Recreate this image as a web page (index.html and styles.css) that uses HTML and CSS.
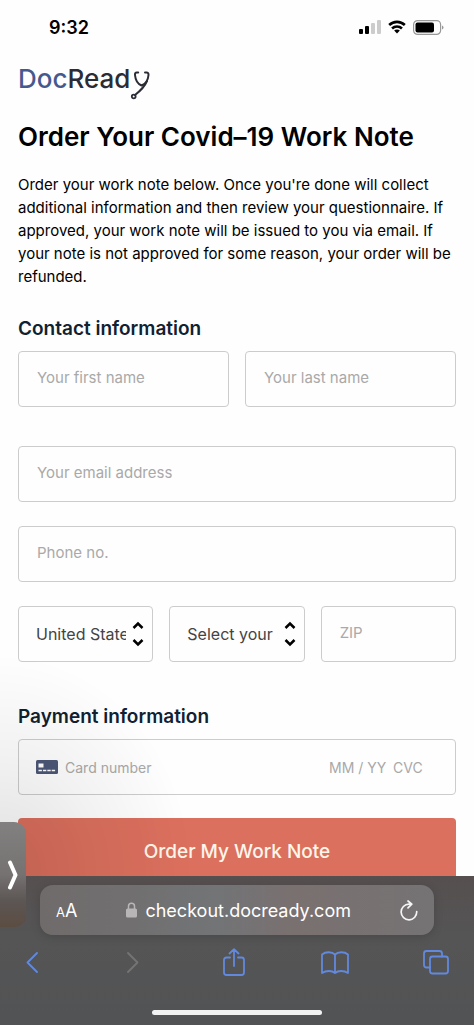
FILE: index.html
```html
<!DOCTYPE html>
<html lang="en">
<head>
<meta charset="utf-8">
<meta name="viewport" content="width=device-width, initial-scale=1">
<title>Order Your Covid-19 Work Note</title>
<link rel="stylesheet" href="styles.css">
</head>
<body>
<header class="status">
  <time class="clock">9:32</time>
  <div class="indicators">
    <svg width="22" height="14" viewBox="0 0 22 14" aria-hidden="true">
      <rect x="0" y="9" width="4" height="5" rx="1"/>
      <rect x="6" y="6" width="4" height="8" rx="1"/>
      <rect x="12" y="3" width="4" height="11" rx="1" fill="#ccc"/>
      <rect x="18" y="0" width="4" height="14" rx="1" fill="#ccc"/>
    </svg>
    <svg width="18" height="14" viewBox="0 0 20 15" fill="none" stroke="#000" stroke-width="2.900" aria-hidden="true">
      <path d="M1.300 5.300C6.200.6 13.800.6 18.700 5.300"/>
      <path d="M4.500 9.100C7.600 6.200 12.400 6.200 15.500 9.100"/>
      <path d="M6.800 11.500C8.500 10 11.500 10 13.200 11.500L10 14.800Z" fill="#000" stroke="none"/>
    </svg>
    <svg width="31" height="15" viewBox="0 0 31 15" aria-hidden="true">
      <rect x=".6" y=".6" width="27" height="13.800" rx="4" fill="none" stroke="#999" stroke-width="1.200"/>
      <rect x="2.500" y="2.500" width="18.500" height="10" rx="2"/>
      <path d="M29 5.500v4q1.500-.5 1.500-2T29 5.500z" fill="#999"/>
    </svg>
  </div>
</header>

<main class="page">
  <div class="logo" role="img" aria-label="DocReady">
    <span class="logo-doc">Doc</span><span class="logo-read">Read</span>
    <svg class="logo-y" width="22" height="34" viewBox="0 0 22 34" fill="none" stroke="#2b2d36" stroke-width="2" stroke-linecap="round" stroke-linejoin="round" aria-hidden="true">
      <path d="M8.200 6.500H6.800Q4.800 6.500 5 9C5.400 13.500 7.800 18 11.500 19.500C15.500 18 18.200 13.500 18.500 9Q18.600 6.500 16.500 6.500H15"/>
      <path d="M17 15Q14 22 5 29"/>
      <circle cx="3.700" cy="30.500" r="1.900" stroke-width="1.800"/>
    </svg>
  </div>
  <h1 class="title">Order Your Covid–19 Work Note</h1>
  <p class="intro">Order your work note below. Once you're done will collect additional information and then review your questionnaire. If approved, your work note will be issued to you via email. If your note is not approved for some reason, your order will be refunded.</p>

  <form class="form">
    <h2 class="section">Contact information</h2>
    <div class="names">
      <input class="field" type="text" aria-label="First name" placeholder="Your first name">
      <input class="field" type="text" aria-label="Last name" placeholder="Your last name">
    </div>
    <div class="contact">
      <input class="field" type="email" aria-label="Email address" placeholder="Your email address">
      <input class="field" type="tel" aria-label="Phone number" placeholder="Phone no.">
      <div class="region">
        <div class="picker">
          <select class="select" aria-label="Country"><option>United States</option></select>
          <svg class="arrows" width="12" height="26" viewBox="0 0 12 26" aria-hidden="true"><path d="M1.500 7 6 2.500 10.500 7M1.500 19 6 23.500 10.500 19"/></svg>
        </div>
        <div class="picker">
          <select class="select" aria-label="State"><option>Select your state</option></select>
          <svg class="arrows" width="12" height="26" viewBox="0 0 12 26" aria-hidden="true"><path d="M1.500 7 6 2.500 10.500 7M1.500 19 6 23.500 10.500 19"/></svg>
        </div>
        <input class="field" type="text" aria-label="ZIP code" placeholder="ZIP">
      </div>
    </div>
    <h2 class="section">Payment information</h2>
    <div class="card">
      <svg width="22" height="14" viewBox="0 0 22 14" aria-hidden="true">
        <rect width="22" height="14" rx="1.500" fill="#4c5878"/>
        <path d="M2.500 3.500h5v4h-5z" fill="#fff"/>
        <path d="M2.500 10.500H20" stroke="#fff" stroke-width="1.500" stroke-dasharray="3.400 1"/>
      </svg>
      <input class="card-input card-number" type="text" aria-label="Card number" placeholder="Card number">
      <input class="card-input card-date" type="text" aria-label="Expiry date" placeholder="MM / YY">
      <input class="card-input card-cvc" type="text" aria-label="CVC" placeholder="CVC">
    </div>
    <button class="submit" type="submit">Order My Work Note</button>
  </form>
</main>

<div class="shade"></div>

<footer class="browser">
  <div class="address">
    <button class="tool text-size" type="button" aria-label="Text size"><span class="small-a">A</span>A</button>
    <div class="url">
      <svg width="11" height="16" viewBox="0 0 11 16" aria-hidden="true"><rect y="6.500" width="11" height="9" rx="1.500" fill="#b9b6b7"/><path d="M2.500 7V4.300a3 3 0 0 1 6 0V7" fill="none" stroke="#b9b6b7" stroke-width="1.500"/></svg>
      <span>checkout.docready.com</span>
    </div>
    <button class="tool" type="button" aria-label="Reload">
      <svg width="18" height="21" viewBox="0 0 18 21" fill="none" stroke="#f5f5f5" stroke-width="1.700" stroke-linecap="round" stroke-linejoin="round"><path d="M16.700 11.500A7.800 7.800 0 1 1 9 4.200h2.500M8 1l3.800 3.200L8 7.800"/></svg>
    </button>
  </div>
  <nav class="toolbar" aria-label="Browser">
    <button class="tool" type="button" aria-label="Back"><svg width="12" height="28" viewBox="0 0 12 28"><path d="M11 5 1.500 14.500 11 24"/></svg></button>
    <button class="tool forward" type="button" aria-label="Forward"><svg width="12" height="28" viewBox="0 0 12 28"><path d="M1 5l9.500 9.500L1 24"/></svg></button>
    <button class="tool" type="button" aria-label="Share"><svg width="22" height="28" viewBox="0 0 22 28"><path d="M7 9.500H3.500Q1 9.500 1 12v12.500Q1 27 3.500 27h15q2.500 0 2.500-2.500V12q0-2.500-2.500-2.500H15M11 18V1.500M6.500 5.500 11 1.200l4.500 4.300"/></svg></button>
    <button class="tool" type="button" aria-label="Bookmarks"><svg width="28" height="28" viewBox="0 0 28 28"><path d="M14 6.500C11 3.500 4.500 3.500 1 6.500V25C5 22.300 11 22.300 14 25C17 22.300 23 22.300 27 25V6.500C23.500 3.500 17 3.500 14 6.500zM14 6.500V25"/></svg></button>
    <button class="tool" type="button" aria-label="Tabs"><svg width="26" height="28" viewBox="0 0 26 28"><rect x="7" y="8.500" width="18" height="17" rx="2.500"/><path d="M7 19.500H3.500Q1 19.500 1 17V5.500Q1 3 3.500 3h13Q19 3 19 5.500v3"/></svg></button>
  </nav>
  <div class="home"></div>
</footer>

<button class="side-tab" type="button" aria-label="Open side panel">
  <svg width="12" height="30" viewBox="0 0 12 30" fill="none" stroke="#fff" stroke-width="4" stroke-linecap="round" stroke-linejoin="round"><path d="M3 2.500 8.500 15 3 27.500"/></svg>
</button>
</body>
</html>
```
FILE: styles.css
```css
* {
  box-sizing: border-box;
}

body {
  margin: 0;
  background: #fefefe;
  color: #000;
  font-family: Inter, "Liberation Sans", sans-serif;
}

button,
input,
select {
  margin: 0;
  font-family: inherit;
}

svg {
  display: block;
  flex: none;
}

.status {
  display: flex;
  align-items: center;
  justify-content: space-between;
  height: 54px;
  padding: 0 30px 0 49px;
}

.clock {
  font-size: 18px;
  font-weight: 600;
}

.indicators {
  display: flex;
  align-items: center;
  gap: 7px;
}

.page {
  padding: 12px 18px 0;
}

.logo {
  display: flex;
  height: 36px;
  font-size: 26px;
  font-weight: 500;
  line-height: 26px;
}

.logo-doc {
  color: #46598f;
}

.logo-read {
  color: #2b2d36;
}

.title {
  margin: 17px 0 0;
  font-size: 26px;
  font-weight: 600;
  line-height: 36px;
  white-space: nowrap;
}

.intro {
  margin: 18px 0 0;
  font-size: 15px;
  line-height: 23px;
}

.section {
  margin: 29px 0 10px;
  color: #0f2233;
  font-size: 19px;
  font-weight: 600;
  line-height: 24px;
}

.names {
  display: grid;
  grid-template-columns: 1fr 1fr;
  gap: 16px;
}

.contact {
  display: grid;
  gap: 24px;
  margin: 39px 0 43px;
}

.region {
  display: grid;
  grid-template-columns: 1fr 1fr 1fr;
  gap: 16px;
}

.field,
.select,
.card {
  width: 100%;
  min-width: 0;
  height: 56px;
  border: 1px solid #ccc;
  border-radius: 4px;
  background: transparent;
}

.field {
  padding: 0 18px 4px;
  font-size: 15px;
}

.field::placeholder,
.card-input::placeholder {
  color: #a9a9a9;
  opacity: 1;
}

.picker {
  position: relative;
  min-width: 0;
}

.select {
  padding: 0 26px 0 17px;
  color: #444;
  font-size: 16px;
  appearance: none;
}

.arrows {
  position: absolute;
  top: 15px;
  right: 9px;
  fill: none;
  stroke: #000;
  stroke-width: 2.5;
  pointer-events: none;
}

.card {
  display: flex;
  align-items: center;
  padding: 0 24px 0 17px;
}

.card-input {
  min-width: 0;
  padding: 0;
  border: 0;
  background: transparent;
  font-size: 14px;
}

.card-number {
  flex: 1;
  margin-left: 7px;
}

.card-date {
  width: 64px;
}

.card-cvc {
  width: 38px;
}

.submit {
  width: 100%;
  height: 66px;
  margin-top: 23px;
  border: 0;
  border-radius: 4px;
  background: #dc705e;
  color: #fff6ea;
  font-size: 19px;
  font-weight: 500;
}

.shade {
  position: fixed;
  bottom: 0;
  left: 0;
  width: 200px;
  height: 380px;
  background: radial-gradient(ellipse at 0 60%, rgba(0, 0, 0, 0.12), rgba(0, 0, 0, 0.05) 35%, rgba(0, 0, 0, 0) 68%);
  pointer-events: none;
}

.browser {
  position: fixed;
  right: 0;
  bottom: 0;
  left: 0;
  height: 149px;
  padding-top: 9px;
  background: linear-gradient(#564f4f, #555556 40%, #525354);
}

.address {
  display: flex;
  align-items: center;
  justify-content: space-between;
  height: 50px;
  margin: 0 40px;
  padding: 0 16px;
  border-radius: 13px;
  background: linear-gradient(90deg, #706b6b, #727476 45%, #7a7070 65%, #757374);
  box-shadow: 0 2px 10px rgba(0, 0, 0, 0.15);
  color: #fff;
}

.tool {
  padding: 0;
  border: 0;
  background: transparent;
  color: inherit;
}

.text-size {
  font-size: 18px;
}

.small-a {
  font-size: 13px;
}

.url {
  display: flex;
  align-items: center;
  gap: 8px;
  font-size: 18px;
}

.toolbar {
  display: flex;
  justify-content: space-between;
  margin: 13px 24px 0 18px;
}

.toolbar .tool {
  display: flex;
  justify-content: center;
  width: 28px;
}

.toolbar svg {
  fill: none;
  stroke: #6289de;
  stroke-width: 1.8;
  stroke-linecap: round;
  stroke-linejoin: round;
}

.toolbar .forward svg {
  stroke: #747475;
}

.home {
  width: 170px;
  height: 5px;
  margin: 34px auto 0;
  border-radius: 3px;
  background: #f2f2f2;
}

.side-tab {
  position: fixed;
  bottom: 98px;
  left: 0;
  display: flex;
  align-items: center;
  width: 26px;
  height: 105px;
  padding: 0 0 0 7px;
  border: 0;
  border-radius: 0 12px 12px 0;
  background: linear-gradient(#828080, #767272 50%, #5c5654 75%, #5c4d42);
}
```
